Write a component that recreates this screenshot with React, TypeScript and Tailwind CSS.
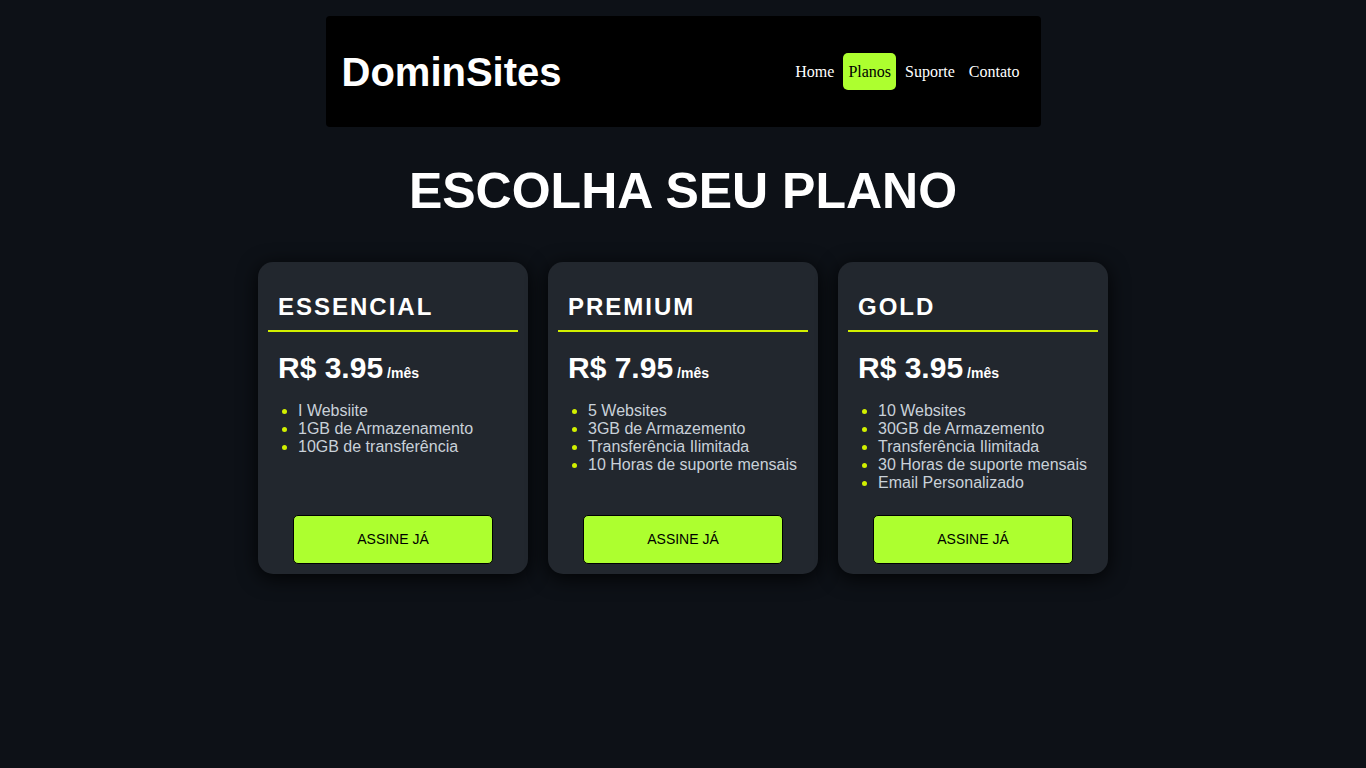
import React from "react";

const plans = [
  { name: "ESSENCIAL", price: "R$ 3.95", items: ["I Websiite", "1GB de Armazenamento", "10GB de transferência"] },
  { name: "PREMIUM", price: "R$ 7.95", items: ["5 Websites", "3GB de Armazemento", "Transferência Ilimitada", "10 Horas de suporte mensais"] },
  { name: "GOLD", price: "R$ 3.95", items: ["10 Websites", "30GB de Armazemento", "Transferência Ilimitada", "30 Horas de suporte mensais", "Email Personalizado"] },
];

export default function App() {
  return (
    <div className="min-h-[768px] w-full bg-[#0d1117] font-['Liberation_Sans',Arial,sans-serif] pt-4">
      <header className="mx-auto flex h-[111px] w-[715px] items-center justify-between rounded-[4px] bg-black pl-4 pr-[16px]">
        <h1 className="text-[40px] font-bold leading-none text-white">DominSites</h1>
        <nav className="flex items-center gap-[4px] font-['Liberation_Serif','Times_New_Roman',serif] text-[16px]">
          <a className="px-[5px] text-white">Home</a>
          <a className="flex h-[37px] items-center rounded-[5px] bg-[#adff2f] px-[5px] text-black">Planos</a>
          <a className="px-[5px] text-white">Suporte</a>
          <a className="px-[5px] text-white">Contato</a>
        </nav>
      </header>
      <h2 className="mt-[35px] text-center text-[50px] font-bold leading-[58px] text-white">ESCOLHA SEU PLANO</h2>
      <div className="mt-[42px] flex justify-center gap-5">
        {plans.map((p) => (
          <div key={p.name} className="flex h-[312px] w-[270px] flex-col rounded-[15px] bg-[#22272e] px-[10px] pb-[10px] shadow-[0_4px_20px_rgba(0,0,0,0.85)]">
            <h3 className="px-[10px] pt-[31px] pb-[10px] text-[24px] font-bold leading-[27px] tracking-[2px] text-white">{p.name}</h3>
            <div className="h-[2px] bg-[#d2f000]" />
            <div className="mt-[19px] flex items-baseline px-[10px] text-white">
              <span className="text-[30px] font-bold leading-[34px]">{p.price}</span>
              <span className="ml-1 text-[14px] font-bold">/mês</span>
            </div>
            <ul className="mt-[17px] pl-[30px] text-[16px] leading-[18px] text-[#c9d1d9] list-disc marker:text-[#d2f000]">
              {p.items.map((i) => (
                <li key={i}>{i}</li>
              ))}
            </ul>
            <div className="mt-auto flex justify-center">
              <button className="h-[49px] w-[200px] rounded-[5px] border border-black bg-[#adff2f] text-[14px] text-black">ASSINE JÁ</button>
            </div>
          </div>
        ))}
      </div>
    </div>
  );
}
